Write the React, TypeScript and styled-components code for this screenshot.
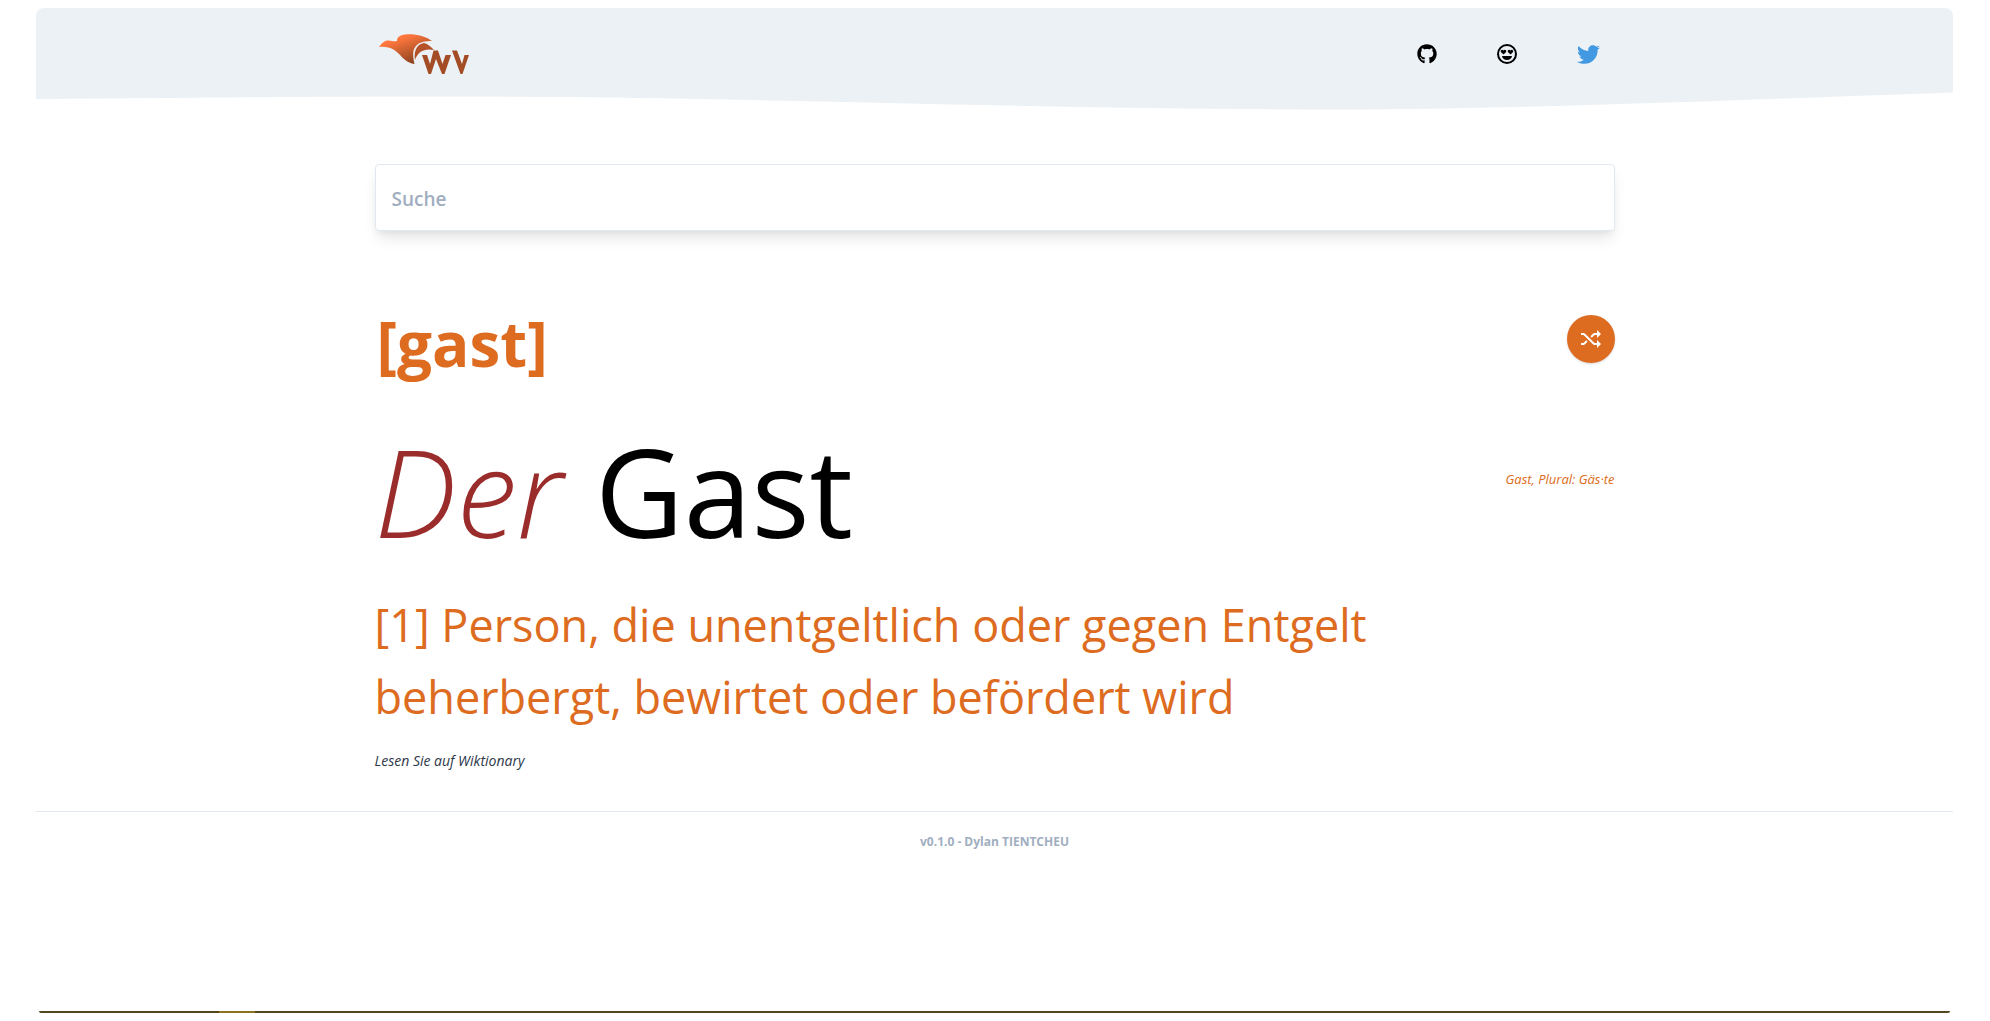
import React from "react";
import styled, { createGlobalStyle } from "styled-components";
import { FaGithub, FaTwitter } from "react-icons/fa";

const GlobalStyle = createGlobalStyle`
  *, *::before, *::after { box-sizing: border-box; }
  body {
    margin: 0;
    background: #fff;
    color: #000;
    font-family: "Segoe UI", "Open Sans", "Noto Sans", sans-serif;
    font-size: 16px;
    line-height: 24px;
  }
  h1, h2, p { margin: 0; font-weight: 400; }
`;

const Page = styled.div`
  display: flex;
  flex-direction: column;
  min-height: 100vh;
  padding: 8px 37px 8px 36px;
`;

const Container = styled.div`
  width: 100%;
  max-width: 1240px;
  margin: 0 auto;
`;

const Header = styled.header`
  background: #ebf1f5;
  border-radius: 8px 8px 0 0;
  height: 84px;
  padding-top: 24px;
`;

const Bar = styled(Container)`
  display: flex;
  align-items: center;
  justify-content: space-between;
  padding: 0 15px 0 4px;
`;

const Logo = styled.a`
  display: flex;
  svg { display: block; width: 92px; height: 44px; }
`;

const Nav = styled.nav`
  display: flex;
  align-items: center;
  gap: 60px;
`;

const IconLink = styled.a<{ $color: string; $size: number }>`
  display: flex;
  color: ${(p) => p.$color};
  svg { display: block; width: ${(p) => p.$size}px; height: ${(p) => p.$size}px; }
`;

const Wave = styled.svg`
  display: block;
  width: 100%;
  height: 18px;
`;

const Search = styled.input`
  display: block;
  width: 100%;
  height: 67px;
  margin-top: 54px;
  padding: 2px 16px 0;
  border: 1px solid #e2e8f0;
  border-radius: 4px;
  background: #fff;
  box-shadow: 0 10px 15px -3px rgba(0, 0, 0, 0.1), 0 4px 6px -2px rgba(0, 0, 0, 0.05);
  font: 600 19px/28px "Segoe UI", "Open Sans", "Noto Sans", sans-serif;
  color: #4a5568;
  outline: none;
  &::placeholder { color: #a0aec0; opacity: 1; }
`;

const Row = styled.div`
  display: flex;
  align-items: center;
  justify-content: space-between;
`;

const PhoneticRow = styled(Row)`
  align-items: flex-start;
  margin-top: 84px;
`;

const Phonetic = styled.h2`
  padding-left: 2px;
  color: #dd6b20;
  font-size: 62px;
  font-weight: 700;
  line-height: 56px;
`;

const Shuffle = styled.button`
  display: flex;
  align-items: center;
  justify-content: center;
  width: 48px;
  height: 48px;
  padding: 0;
  border: 0;
  border-radius: 50%;
  background: #dd6b20;
  color: #fff;
  cursor: pointer;
  box-shadow: 0 1px 3px rgba(0, 0, 0, 0.1), 0 1px 2px rgba(0, 0, 0, 0.06);
  svg { display: block; width: 20px; height: 20px; fill: currentColor; }
`;

const WordRow = styled(Row)`
  margin-top: 12px;
`;

const Word = styled.h1`
  padding-top: 24px;
  font-size: 122px;
  line-height: 168px;
`;

const Article = styled.em`
  color: #9b2c2c;
  font-weight: 300;
`;

const Forms = styled.em`
  color: #dd6b20;
  font-size: 13px;
`;

const Definition = styled.p`
  max-width: 1100px;
  margin-top: 14px;
  color: #dd6b20;
  font-size: 45px;
  line-height: 72px;
`;

const Source = styled.a`
  display: block;
  width: fit-content;
  margin-top: 16px;
  color: #2d3748;
  font-size: 14px;
  font-style: italic;
  text-decoration: none;
`;

const Footer = styled.footer`
  margin-top: 38px;
  padding-top: 18px;
  border-top: 1px solid #e2e8f0;
  color: #a0aec0;
  font-size: 12px;
  font-weight: 700;
  text-align: center;
`;

const BottomBar = styled.div`
  height: 2px;
  margin: auto 3px 0;
  border-radius: 0 0 4px 4px;
  background: linear-gradient(90deg, #52471f 180px, #8c7120 180px, #8c7120 216px, #52471f 216px);
`;

export default function App() {
  return (
    <>
      <GlobalStyle />
      <Page>
        <Header>
          <Bar>
            <Logo href="#" aria-label="Home">
              <svg viewBox="0 -1 92 44">
                <defs>
                  <linearGradient id="bird" x1="0.3" y1="0.2" x2="0.75" y2="0.95">
                    <stop offset="0" stopColor="#ff773d" />
                    <stop offset="1" stopColor="#87401f" />
                  </linearGradient>
                </defs>
                <path
                  fill="url(#bird)"
                  d="M0 14C2 11 5 8 8 7.500C12 7 15 9 18 8C18 4 21 2 26 1.500C36 0.500 46 3 53 8C46 8 40 9 37 13C33 17 34 24 35.500 31C28 30 24 25 19 20C14 15 8 13 0 14Z"
                />
                <path
                  fill="#b5522a"
                  d="M36 27C34.500 18 38 11 45 10C49 11 52 14 55 17C46 15 39 18 36 27Z"
                />
                <path
                  fill="#a34c26"
                  d="M43 22H48L51 31L54.500 17.500H59L63.500 31L66.500 22H72L65.500 41H63L57 26L52 41H49.500ZM73 17.500H78L83 31L85.500 22H90L83.500 41H81.500Z"
                />
              </svg>
            </Logo>
            <Nav>
              <IconLink href="#" aria-label="GitHub" $color="#000" $size={20}>
                <FaGithub />
              </IconLink>
              <IconLink href="#" aria-label="Emoji" $color="#000" $size={20}>
                <svg viewBox="0 0 20 20" fill="currentColor">
                  <circle cx="10" cy="10" r="9" fill="none" stroke="currentColor" strokeWidth="2" />
                  <path d="M5 12H15C14.600 14.600 12.600 16 10 16S5.400 14.600 5 12Z" />
                  <path d="M6.500 10.500L3.900 7.900C3 6.400 5.300 4.900 6.500 6.500C7.700 4.900 10 6.400 9.100 7.900Z" />
                  <path d="M13.500 10.500L10.900 7.900C10 6.400 12.300 4.900 13.500 6.500C14.700 4.900 17 6.400 16.100 7.900Z" />
                </svg>
              </IconLink>
              <IconLink href="#" aria-label="Twitter" $color="#4299e1" $size={23}>
                <FaTwitter />
              </IconLink>
            </Nav>
          </Bar>
        </Header>
        <Wave viewBox="0 0 1440 18" preserveAspectRatio="none" aria-hidden="true">
          <path
            fill="#ebf1f5"
            d="M0 7L120 5.800C240 4.500 300 4.200 400 5C560 7 780 17.500 980 17.500C1120 17 1300 7 1440 0.500V0H0Z"
          />
        </Wave>
        <Container as="main">
          <Search type="search" placeholder="Suche" aria-label="Suche" />
          <PhoneticRow>
            <Phonetic>[gast]</Phonetic>
            <Shuffle type="button" aria-label="Zufälliges Wort">
              <svg viewBox="0 0 20 20">
                <path d="M6.590 12.830L4.400 15C3.580 15.820 2.800 16 2 16H0V14H2C2.290 14 2.600 13.820 3 13.410L5.170 11.240L6.590 12.830ZM16 4V1L20 5L16 9V6H14C13.700 6 13.400 6.180 13 6.590L10.830 8.760L9.410 7.170L11.600 5C12.420 4.180 13.200 4 14 4H16ZM16 14V11L20 15L16 19V16H14C13.170 16 12.400 15.820 11.600 15L3 6.410C2.600 6 2.290 6 2 6H0V4H2C2.860 4 3.630 4.180 4.400 5L13 13.590C13.400 13.980 13.700 14 14 14H16Z" />
              </svg>
            </Shuffle>
          </PhoneticRow>
          <WordRow>
            <Word>
              <Article>Der</Article> Gast
            </Word>
            <Forms>Gast, Plural: Gäs·te</Forms>
          </WordRow>
          <Definition>[1] Person, die unentgeltlich oder gegen Entgelt beherbergt, bewirtet oder befördert wird</Definition>
          <Source href="#">Lesen Sie auf Wiktionary</Source>
        </Container>
        <Footer>v0.1.0 - Dylan TIENTCHEU</Footer>
        <BottomBar />
      </Page>
    </>
  );
}
